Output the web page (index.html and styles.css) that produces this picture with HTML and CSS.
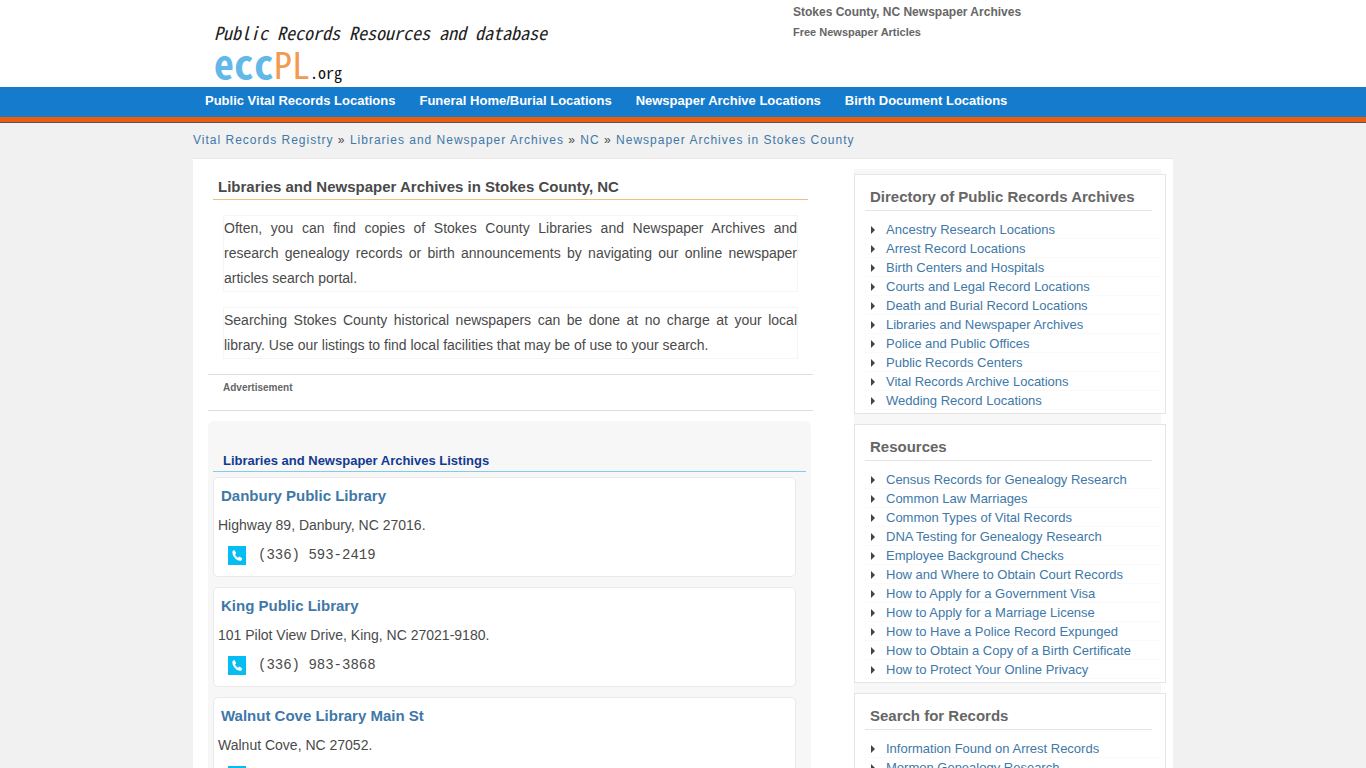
FILE: index.html
```html
<!DOCTYPE html>
<html lang="en">
<head>
    <meta charset="UTF-8">
    <meta name="viewport" content="width=device-width, initial-scale=1.0">
    <title>Stokes County, NC Newspaper Archives</title>
    <link rel="stylesheet" href="styles.css">
</head>
<body>
    <div class="header">
        <div class="wrap header-inner">
            <a class="logo" href="#">
                <span class="tagline">Public Records Resources and database</span>
                <span class="brand"><b class="ecc">ecc</b><span class="pl">PL</span><span class="org">.org</span></span>
            </a>
            <div class="header-text">
                <h1>Stokes County, NC Newspaper Archives</h1>
                <h2>Free Newspaper Articles</h2>
            </div>
        </div>
    </div>
    <div class="nav">
        <div class="wrap nav-inner">
            <a href="#">Public Vital Records Locations</a>
            <a href="#">Funeral Home/Burial Locations</a>
            <a href="#">Newspaper Archive Locations</a>
            <a href="#">Birth Document Locations</a>
        </div>
    </div>

    <div class="wrap crumbs">
        <a href="#">Vital Records Registry</a> <span>»</span>
        <a href="#">Libraries and Newspaper Archives</a> <span>»</span>
        <a href="#">NC</a> <span>»</span>
        <a href="#">Newspaper Archives in Stokes County</a>
    </div>

    <div class="wrap content">
        <div class="main">
            <h2 class="title">Libraries and Newspaper Archives in Stokes County, NC</h2>
            <p class="intro">Often, you can find copies of Stokes County Libraries and Newspaper Archives and research genealogy records or birth announcements by navigating our online newspaper articles search portal.</p>
            <p class="intro">Searching Stokes County historical newspapers can be done at no charge at your local library. Use our listings to find local facilities that may be of use to your search.</p>
            <div class="ad">Advertisement</div>

            <div class="listings">
                <h3>Libraries and Newspaper Archives Listings</h3>
                <div class="listing">
                    <a href="#">Danbury Public Library</a>
                    <p>Highway 89, Danbury, NC 27016.</p>
                    <div class="phone">
                        <svg viewBox="0 0 18 19"><path d="M0 0h18v19H0z" fill="#05bdf2"/><path d="M4.500 5 6.500 4l1.700 3.200-1.200 1.300c.7 1.500 1.700 2.500 3.200 3.200l1.400-1.200 2.700 1.900-.9 2.200c-4 1.300-10-4.600-8.900-9.600z" fill="#fff"/></svg>
                        <span>(336) 593-2419</span>
                    </div>
                </div>
                <div class="listing">
                    <a href="#">King Public Library</a>
                    <p>101 Pilot View Drive, King, NC 27021-9180.</p>
                    <div class="phone">
                        <svg viewBox="0 0 18 19"><path d="M0 0h18v19H0z" fill="#05bdf2"/><path d="M4.500 5 6.500 4l1.700 3.200-1.200 1.300c.7 1.500 1.700 2.500 3.200 3.200l1.400-1.200 2.700 1.900-.9 2.200c-4 1.300-10-4.600-8.900-9.600z" fill="#fff"/></svg>
                        <span>(336) 983-3868</span>
                    </div>
                </div>
                <div class="listing">
                    <a href="#">Walnut Cove Library Main St</a>
                    <p>Walnut Cove, NC 27052.</p>
                    <div class="phone">
                        <svg viewBox="0 0 18 19"><path d="M0 0h18v19H0z" fill="#05bdf2"/><path d="M4.500 5 6.500 4l1.700 3.200-1.200 1.300c.7 1.500 1.700 2.500 3.200 3.200l1.400-1.200 2.700 1.900-.9 2.200c-4 1.300-10-4.600-8.900-9.600z" fill="#fff"/></svg>
                    </div>
                </div>
            </div>
        </div>

        <div class="sidebar">
            <div class="box">
                <h3>Directory of Public Records Archives</h3>
                <ul>
                    <li><a href="#">Ancestry Research Locations</a></li>
                    <li><a href="#">Arrest Record Locations</a></li>
                    <li><a href="#">Birth Centers and Hospitals</a></li>
                    <li><a href="#">Courts and Legal Record Locations</a></li>
                    <li><a href="#">Death and Burial Record Locations</a></li>
                    <li><a href="#">Libraries and Newspaper Archives</a></li>
                    <li><a href="#">Police and Public Offices</a></li>
                    <li><a href="#">Public Records Centers</a></li>
                    <li><a href="#">Vital Records Archive Locations</a></li>
                    <li><a href="#">Wedding Record Locations</a></li>
                </ul>
            </div>
            <div class="box">
                <h3>Resources</h3>
                <ul>
                    <li><a href="#">Census Records for Genealogy Research</a></li>
                    <li><a href="#">Common Law Marriages</a></li>
                    <li><a href="#">Common Types of Vital Records</a></li>
                    <li><a href="#">DNA Testing for Genealogy Research</a></li>
                    <li><a href="#">Employee Background Checks</a></li>
                    <li><a href="#">How and Where to Obtain Court Records</a></li>
                    <li><a href="#">How to Apply for a Government Visa</a></li>
                    <li><a href="#">How to Apply for a Marriage License</a></li>
                    <li><a href="#">How to Have a Police Record Expunged</a></li>
                    <li><a href="#">How to Obtain a Copy of a Birth Certificate</a></li>
                    <li><a href="#">How to Protect Your Online Privacy</a></li>
                </ul>
            </div>
            <div class="box">
                <h3>Search for Records</h3>
                <ul>
                    <li><a href="#">Information Found on Arrest Records</a></li>
                    <li><a href="#">Mormon Genealogy Research</a></li>
                </ul>
            </div>
        </div>
    </div>
</body>
</html>
```
FILE: styles.css
```css
* {
    box-sizing: border-box;
}
html {
    scrollbar-width: none;
}
body {
    margin: 0;
    background-color: #f1f1f1;
    font-family: "Liberation Sans", Arial, sans-serif;
    font-size: 14px;
    color: #4a4a4a;
}
h1, h2, h3, p, ul {
    margin: 0;
    padding: 0;
}
a {
    color: #4078a8;
    text-decoration: none;
}
.wrap {
    max-width: 980px;
    margin: 0 auto;
}
.header {
    background-color: #fff;
}
.header-inner {
    display: flex;
    height: 87px;
}
.logo {
    flex: 0 0 600px;
    padding: 22px 0 0 21px;
    font-family: "Noto Sans Mono CJK JP", "DejaVu Sans Mono", monospace;
}
.tagline, .brand {
    display: block;
}
.tagline {
    font-size: 18px;
    font-style: italic;
    line-height: 20px;
    color: #222;
}
.brand {
    line-height: 40px;
    white-space: nowrap;
}
.ecc {
    font-size: 40px;
    color: #62b8e8;
}
.pl {
    font-size: 36px;
    color: #f39a50;
}
.org {
    font-size: 16px;
    color: #111;
}
.header-text {
    padding-top: 2px;
    color: #666;
}
.header-text h1 {
    font-size: 12px;
    line-height: 20px;
}
.header-text h2 {
    font-size: 11px;
    line-height: 20px;
}
.nav {
    background-color: #147bcd;
    border-bottom: 1px solid #555;
}
.nav::after {
    content: "";
    display: block;
    height: 5px;
    background-color: #eb5c0c;
}
.nav-inner {
    display: flex;
    gap: 24px;
    padding: 0 12px;
}
.nav-inner a {
    color: #fff;
    font-size: 13px;
    font-weight: bold;
    line-height: 28px;
    padding-bottom: 2px;
}
.crumbs {
    height: 35px;
    font-size: 12px;
    line-height: 34px;
    letter-spacing: 1px;
}
.content {
    display: flex;
    justify-content: space-between;
    align-items: flex-start;
    background-color: #fff;
    border-top: 1px solid #e8e8e8;
    padding: 10px 12px 10px 15px;
}
.main {
    flex: 0 1 605px;
    padding-top: 5px;
}
.title {
    font-size: 15px;
    line-height: 25px;
    margin: 0 5px 15px;
    padding-left: 5px;
    border-bottom: 1px solid #f0bd80;
}
.intro {
    margin: 0 15px 15px;
    border: 1px solid #f5f5f5;
    line-height: 25px;
    text-align: justify;
}
.ad {
    height: 37px;
    border-top: 1px solid #ddd;
    border-bottom: 1px solid #ddd;
    padding-left: 15px;
    font-size: 10px;
    font-weight: bold;
    line-height: 25px;
    color: #666;
}
.listings {
    margin: 10px 2px 0 0;
    padding: 30px 5px 10px;
    background-color: #f7f7f7;
    border-radius: 6px;
}
.listings h3 {
    font-size: 13px;
    line-height: 20px;
    padding-left: 10px;
    margin-bottom: 5px;
    color: #133a92;
    border-bottom: 1px solid #83cbe8;
}
.listing {
    margin: 0 10px 10px 0;
    height: 100px;
    padding: 4px;
    background-color: #fff;
    border: 1px solid #eaeaea;
    border-radius: 5px;
}
.listing a {
    display: block;
    padding-left: 3px;
    font-size: 15px;
    font-weight: bold;
    line-height: 28px;
}
.listing p {
    line-height: 30px;
}
.phone {
    display: flex;
    align-items: center;
    gap: 12px;
    height: 30px;
    padding-left: 10px;
    font-family: "Liberation Mono", "Courier New", monospace;
}
.phone svg {
    width: 18px;
    height: 19px;
}
.sidebar {
    flex: 0 0 307px;
    padding-top: 5px;
    background-color: #f7f7f7;
}
.box {
    margin: 0 -5px 10px 0;
    padding: 9px 5px 3px 10px;
    background-color: #fff;
    border: 1px solid #e4e4e4;
}
.box h3 {
    font-size: 15px;
    line-height: 26px;
    margin: 0 8px 9px 0;
    padding-left: 5px;
    color: #666;
    border-bottom: 1px solid #e4e4e4;
}
.box ul {
    list-style: none;
}
.box li {
    display: flex;
    align-items: center;
    gap: 11px;
    height: 19px;
    padding-left: 6px;
    border-bottom: 1px solid #fafafa;
    font-size: 13px;
}
.box li::before {
    content: "";
    margin-top: 2px;
    border: 4px solid transparent;
    border-left-color: #444;
    border-right-width: 0;
}
```
